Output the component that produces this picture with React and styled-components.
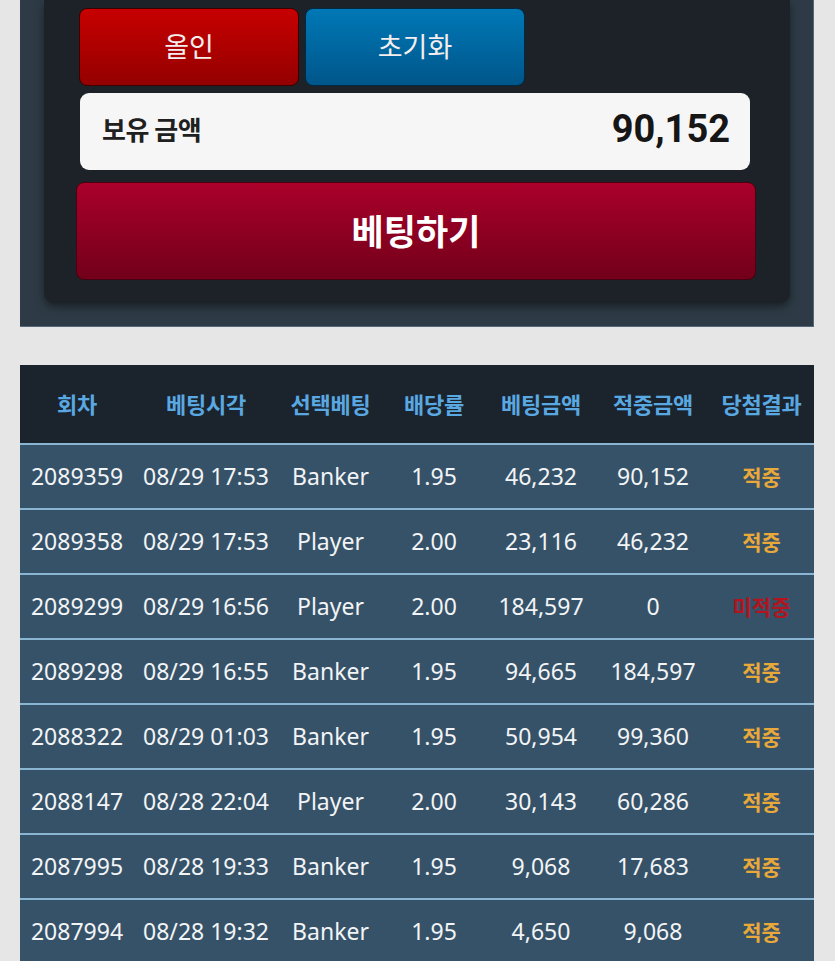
import React from 'react';
import styled, { createGlobalStyle } from 'styled-components';

const GlobalStyle = createGlobalStyle`
    html, body {
        margin: 0;
        padding: 0;
        background: #e6e6e6;
        font-family: "Noto Sans", "Noto Sans CJK KR", sans-serif;
    }
`

const Page = styled.div`
    width: 835px;
    padding: 0 21px 0 20px;
    box-sizing: border-box;
`

const BetPanel = styled.div`
    background-color: #2e3b46;
    border-right: 1px solid #55677a;
    border-bottom: 1px solid #55677a;
    padding: 0 23px 23px 24px;
`

const BetInner = styled.div`
    background-color: #1c2227;
    border-radius: 0 0 10px 10px;
    box-shadow: 0 4px 10px rgba(0, 0, 0, 0.45);
    padding: 8px 34px 23px 32px;
    display: flex;
    flex-direction: column;
`

const ButtonRow = styled.div`
    display: flex;
    gap: 6px;
    margin-left: 3px;
`

const QuickButton = styled.button`
    width: 220px;
    height: 78px;
    border: 1px solid ${p => p.$border};
    border-radius: 8px;
    background: linear-gradient(to bottom, ${p => p.$top}, ${p => p.$bottom});
    color: #f4eeee;
    font-family: "Noto Sans CJK KR", sans-serif;
    font-size: 27px;
    font-weight: 400;
    padding: 0 0 4px;
    cursor: pointer;
`

const Balance = styled.div`
    margin: 7px 6px 0 4px;
    height: 77px;
    background-color: #f6f6f7;
    border-radius: 9px;
    display: flex;
    align-items: center;
    justify-content: space-between;
    padding: 0 20px 6px 22px;
    box-sizing: border-box;
`

const BalanceLabel = styled.span`
    font-family: "Noto Sans CJK KR", sans-serif;
    font-size: 26px;
    font-weight: 700;
    color: #202020;
    letter-spacing: -0.5px;
`

const BalanceValue = styled.span`
    font-family: Roboto, "Noto Sans", sans-serif;
    font-size: 38px;
    font-weight: 700;
    color: #161616;
`

const BetButton = styled.button`
    margin-top: 12px;
    height: 98px;
    border: 1px solid #4a0010;
    border-radius: 8px;
    background: linear-gradient(to bottom, #aa002a, #72001a);
    color: #ffffff;
    font-family: "Noto Sans CJK KR", sans-serif;
    font-size: 35px;
    font-weight: 700;
    padding: 0 0 4px;
    cursor: pointer;
`

const HistoryTable = styled.table`
    margin-top: 38px;
    width: 794px;
    border-collapse: collapse;
    table-layout: fixed;
`

const HeadCell = styled.th`
    height: 76px;
    background-color: #1b242d;
    color: #5aa8e2;
    font-family: "Noto Sans CJK KR", sans-serif;
    font-size: 22px;
    font-weight: 700;
    text-align: center;
    padding: 0 0 2px;
    white-space: nowrap;
    letter-spacing: -0.3px;
`

const Row = styled.tr`
    background-color: #365268;
    border-top: 2px solid #8ab6d4;
`

const Cell = styled.td`
    height: 61px;
    padding: 0 0 2px;
    text-align: center;
    color: ${p => p.$color || '#f2f4f6'};
    font-family: "Noto Sans", "Noto Sans CJK KR", sans-serif;
    font-size: ${p => p.$result ? '21px' : '23px'};
    font-weight: ${p => p.$result ? 700 : 400};
    white-space: nowrap;
`

const columns = [
    { title: '회차', width: 114 },
    { title: '베팅시각', width: 144 },
    { title: '선택베팅', width: 105 },
    { title: '배당률', width: 102 },
    { title: '베팅금액', width: 112 },
    { title: '적중금액', width: 112 },
    { title: '당첨결과', width: 105 },
]

const bets = [
    ['2089359', '08/29 17:53', 'Banker', '1.95', '46,232', '90,152', true],
    ['2089358', '08/29 17:53', 'Player', '2.00', '23,116', '46,232', true],
    ['2089299', '08/29 16:56', 'Player', '2.00', '184,597', '0', false],
    ['2089298', '08/29 16:55', 'Banker', '1.95', '94,665', '184,597', true],
    ['2088322', '08/29 01:03', 'Banker', '1.95', '50,954', '99,360', true],
    ['2088147', '08/28 22:04', 'Player', '2.00', '30,143', '60,286', true],
    ['2087995', '08/28 19:33', 'Banker', '1.95', '9,068', '17,683', true],
    ['2087994', '08/28 19:32', 'Banker', '1.95', '4,650', '9,068', true],
]

function App() {
    return (
        <Page>
            <GlobalStyle />
            <BetPanel>
                <BetInner>
                    <ButtonRow>
                        <QuickButton $top="#c70000" $bottom="#940000" $border="#3c0000">올인</QuickButton>
                        <QuickButton $top="#0078b6" $bottom="#00568a" $border="#002a46">초기화</QuickButton>
                    </ButtonRow>
                    <Balance>
                        <BalanceLabel>보유 금액</BalanceLabel>
                        <BalanceValue>90,152</BalanceValue>
                    </Balance>
                    <BetButton>베팅하기</BetButton>
                </BetInner>
            </BetPanel>

            <HistoryTable>
                <colgroup>
                    {columns.map(c => <col key={c.title} style={{ width: c.width }} />)}
                </colgroup>
                <thead>
                    <tr>
                        {columns.map(c => <HeadCell key={c.title}>{c.title}</HeadCell>)}
                    </tr>
                </thead>
                <tbody>
                    {bets.map(b => (
                        <Row key={b[0]}>
                            <Cell>{b[0]}</Cell>
                            <Cell>{b[1]}</Cell>
                            <Cell>{b[2]}</Cell>
                            <Cell>{b[3]}</Cell>
                            <Cell>{b[4]}</Cell>
                            <Cell>{b[5]}</Cell>
                            <Cell $result $color={b[6] ? '#e8a93a' : '#b3141e'}>
                                {b[6] ? '적중' : '미적중'}
                            </Cell>
                        </Row>
                    ))}
                </tbody>
            </HistoryTable>
        </Page>
    )
}

export default App;
